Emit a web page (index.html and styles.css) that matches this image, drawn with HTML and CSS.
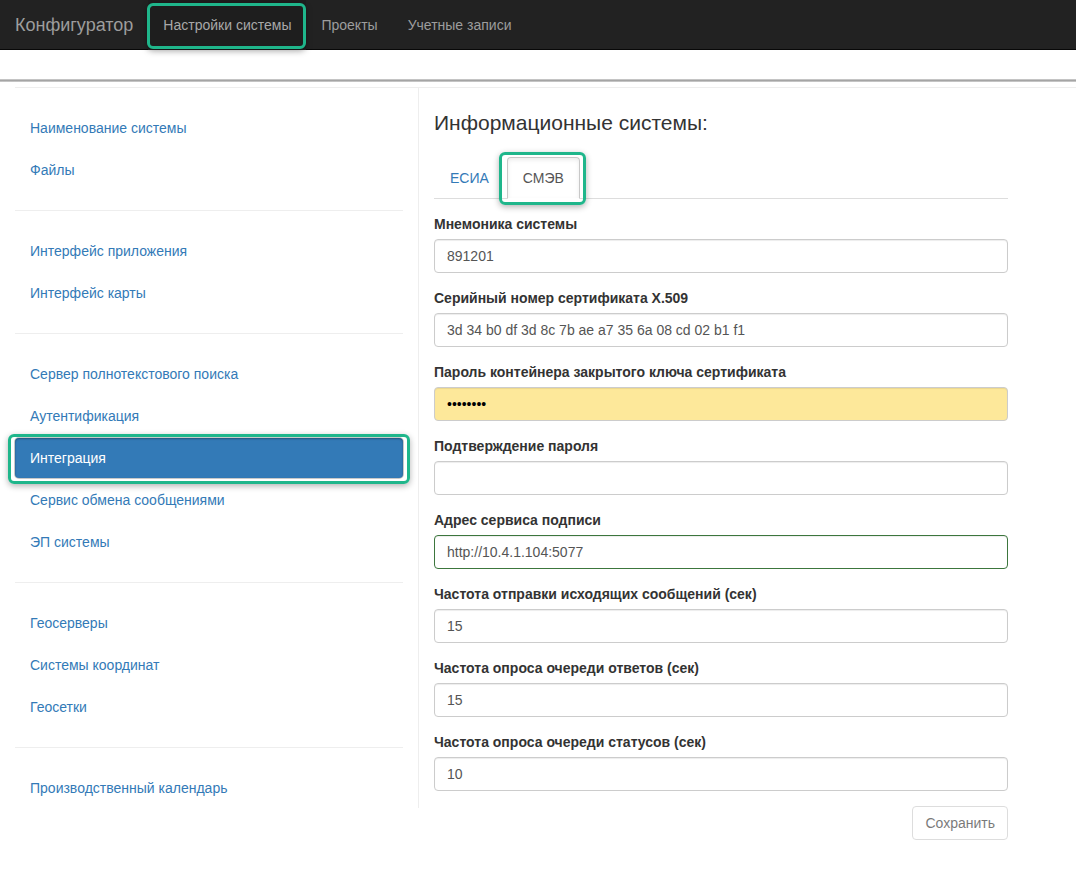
FILE: index.html
```html
<!DOCTYPE html>
<html lang="ru">
<head>
<meta charset="utf-8">
<title>Конфигуратор</title>
<link rel="stylesheet" href="styles.css">
</head>
<body>
<header class="navbar">
  <a class="brand" href="#">Конфигуратор</a>
  <ul class="topnav">
    <li><a class="topnav-link is-active mark" href="#">Настройки системы</a></li>
    <li><a class="topnav-link" href="#">Проекты</a></li>
    <li><a class="topnav-link" href="#">Учетные записи</a></li>
  </ul>
</header>
<div class="rule"></div>
<div class="layout">
  <aside class="sidebar">
    <ul class="side-nav">
      <li><a href="#">Наименование системы</a></li>
      <li><a href="#">Файлы</a></li>
    </ul>
    <hr class="side-divider">
    <ul class="side-nav">
      <li><a href="#">Интерфейс приложения</a></li>
      <li><a href="#">Интерфейс карты</a></li>
    </ul>
    <hr class="side-divider">
    <ul class="side-nav">
      <li><a href="#">Сервер полнотекстового поиска</a></li>
      <li><a href="#">Аутентификация</a></li>
      <li><a class="is-active mark" href="#">Интеграция</a></li>
      <li><a href="#">Сервис обмена сообщениями</a></li>
      <li><a href="#">ЭП системы</a></li>
    </ul>
    <hr class="side-divider">
    <ul class="side-nav">
      <li><a href="#">Геосерверы</a></li>
      <li><a href="#">Системы координат</a></li>
      <li><a href="#">Геосетки</a></li>
    </ul>
    <hr class="side-divider">
    <ul class="side-nav">
      <li><a href="#">Производственный календарь</a></li>
    </ul>
  </aside>
  <main class="content">
    <h2 class="title">Информационные системы:</h2>
    <ul class="tabs">
      <li><a class="tab" href="#">ЕСИА</a></li>
      <li><a class="tab is-active mark" href="#">СМЭВ</a></li>
    </ul>
    <form class="form">
      <div class="form-group">
        <label class="label">Мнемоника системы</label>
        <input class="input" type="text" value="891201">
      </div>
      <div class="form-group">
        <label class="label">Серийный номер сертификата X.509</label>
        <input class="input" type="text" value="3d 34 b0 df 3d 8c 7b ae a7 35 6a 08 cd 02 b1 f1">
      </div>
      <div class="form-group">
        <label class="label">Пароль контейнера закрытого ключа сертификата</label>
        <input class="input input-autofill" type="password" value="12345678">
      </div>
      <div class="form-group">
        <label class="label">Подтверждение пароля</label>
        <input class="input" type="password" value="">
      </div>
      <div class="form-group">
        <label class="label">Адрес сервиса подписи</label>
        <input class="input input-success" type="text" value="http://10.4.1.104:5077">
      </div>
      <div class="form-group">
        <label class="label">Частота отправки исходящих сообщений (сек)</label>
        <input class="input" type="text" value="15">
      </div>
      <div class="form-group">
        <label class="label">Частота опроса очереди ответов (сек)</label>
        <input class="input" type="text" value="15">
      </div>
      <div class="form-group">
        <label class="label">Частота опроса очереди статусов (сек)</label>
        <input class="input" type="text" value="10">
      </div>
      <div class="actions">
        <button class="btn" type="button" disabled>Сохранить</button>
      </div>
    </form>
  </main>
</div>
</body>
</html>
```
FILE: styles.css
```css
* { box-sizing: border-box; }

html, body {
  margin: 0;
  padding: 0;
  background: #fff;
}

body {
  font-family: "Liberation Sans", Arial, sans-serif;
  font-size: 14px;
  line-height: 20px;
  color: #333;
}

a { text-decoration: none; }

ul { list-style: none; margin: 0; padding: 0; }

/* ---------- navbar ---------- */
.navbar {
  height: 50px;
  background: #222;
  border-bottom: 1px solid #080808;
  display: flex;
  align-items: stretch;
}

.brand {
  padding: 15px 15px;
  font-size: 18px;
  line-height: 20px;
  color: #9d9d9d;
}

.topnav {
  display: flex;
}

.topnav-link {
  display: block;
  padding: 15px 15px;
  line-height: 20px;
  color: #9d9d9d;
  position: relative;
}

.topnav-link.is-active {
  color: #a8a8a8;
  background: #1e1e1e;
}

.topnav-link.mark::after {
  content: "";
  position: absolute;
  top: 3px;
  bottom: 1px;
  left: -1px;
  right: 0;
  border: 3px solid #1fb68b;
  border-radius: 6px;
  box-shadow: 0 2px 6px rgba(0, 0, 0, 0.35);
}

/* ---------- separators ---------- */
.rule {
  margin-top: 29px;
  height: 3px;
  background: linear-gradient(#d4d4d4, #a5a5a5 50%, #d4d4d4);
}

.layout {
  margin-top: 5px;
  margin-left: 15px;
  border-top: 1px solid #eee;
  display: flex;
  align-items: flex-start;
}

/* ---------- sidebar ---------- */
.sidebar {
  width: 404px;
  flex: none;
  padding: 20px 15px 0 0;
  border-right: 1px solid #eee;
}

.side-nav li + li { margin-top: 2px; }

.side-nav a {
  display: block;
  padding: 10px 15px;
  line-height: 20px;
  color: #337ab7;
  border-radius: 4px;
  position: relative;
}

.side-nav a.is-active {
  background: #337ab7;
  color: #fff;
  box-shadow: inset 0 1px 2px rgba(0, 0, 0, 0.35), 0 0 0 1px #c9c9c9;
}

.side-nav a.mark::after {
  content: "";
  position: absolute;
  top: -4px;
  bottom: -6px;
  left: -7px;
  right: -7px;
  border: 3px solid #1fb68b;
  border-radius: 6px;
  box-shadow: 0 2px 6px rgba(0, 0, 0, 0.3);
}

.side-divider {
  margin: 20px 0;
  border: 0;
  border-top: 1px solid #eee;
  height: 0;
}

/* ---------- content ---------- */
.content {
  width: 589px;
  flex: none;
  padding-left: 15px;
}

.title {
  margin: 23px 0 22px;
  font-size: 21px;
  line-height: 24px;
  font-weight: 400;
  color: #333;
}

.tabs {
  display: flex;
  border-bottom: 1px solid #ddd;
}

.tabs li { margin-bottom: -1px; }

.tab {
  display: block;
  margin-right: 2px;
  padding: 10px 15px;
  line-height: 20px;
  border: 1px solid transparent;
  border-radius: 4px 4px 0 0;
  color: #337ab7;
  position: relative;
}

.tab.is-active {
  color: #555;
  background: #fff;
  border-color: #c8c8c8 #c8c8c8 transparent;
  box-shadow: inset 0 2px 4px rgba(0, 0, 0, 0.08);
}

.tab.mark::after {
  content: "";
  position: absolute;
  top: -6px;
  bottom: -7px;
  left: -9px;
  right: -7px;
  border: 3px solid #1fb68b;
  border-radius: 6px;
  box-shadow: 0 2px 6px rgba(0, 0, 0, 0.3);
}

.form { padding-top: 15px; }

.form-group { margin-bottom: 15px; }

.label {
  display: block;
  margin-bottom: 5px;
  font-weight: 700;
  color: #333;
}

.input {
  display: block;
  width: 100%;
  height: 34px;
  padding: 6px 12px;
  font-family: inherit;
  font-size: 14px;
  line-height: 20px;
  color: #555;
  background: #fff;
  border: 1px solid #ccc;
  border-radius: 4px;
  box-shadow: inset 0 1px 1px rgba(0, 0, 0, 0.075);
  outline: none;
}

.input-autofill {
  background: #fde89a;
  color: #000;
}

.input-success {
  border-color: #3c763d;
}

.actions {
  display: flex;
  justify-content: flex-end;
}

.btn {
  height: 34px;
  padding: 6px 12px;
  font-family: inherit;
  font-size: 14px;
  line-height: 20px;
  color: #333;
  background: #fff;
  border: 1px solid #ccc;
  border-radius: 4px;
  opacity: 0.65;
}
```
